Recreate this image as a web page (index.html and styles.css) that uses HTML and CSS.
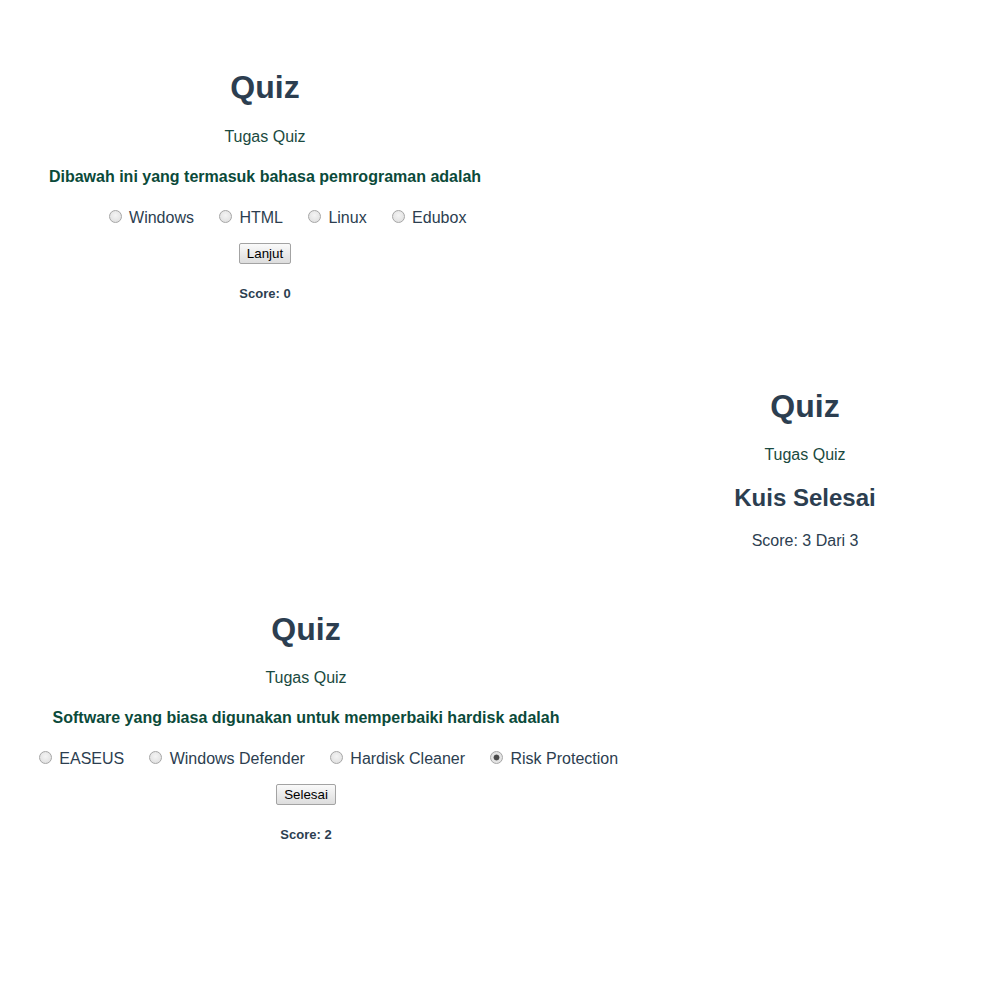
FILE: index.html
```html
<!DOCTYPE html>
<html lang="id">
<head>
<meta charset="utf-8">
<title>Quiz</title>
<link rel="stylesheet" href="styles.css">
</head>
<body>
<main class="page">
  <section class="quiz quiz-one">
    <h1 class="title">Quiz</h1>
    <p class="sub">Tugas Quiz</p>
    <p class="question">Dibawah ini yang termasuk bahasa pemrograman adalah</p>
    <div class="options">
      <label class="opt"><input type="radio" name="q1" class="radio"> Windows</label>
      <label class="opt"><input type="radio" name="q1" class="radio"> HTML</label>
      <label class="opt"><input type="radio" name="q1" class="radio"> Linux</label>
      <label class="opt"><input type="radio" name="q1" class="radio"> Edubox</label>
    </div>
    <div class="actions"><button class="btn" type="button">Lanjut</button></div>
    <p class="score">Score: 0</p>
  </section>

  <section class="final">
    <h1 class="title">Quiz</h1>
    <p class="sub sub-tight">Tugas Quiz</p>
    <h2 class="done">Kuis Selesai</h2>
    <p class="result">Score: 3 Dari 3</p>
  </section>

  <section class="quiz quiz-three">
    <h1 class="title">Quiz</h1>
    <p class="sub sub-tight">Tugas Quiz</p>
    <p class="question">Software yang biasa digunakan untuk memperbaiki hardisk adalah</p>
    <div class="options">
      <label class="opt"><input type="radio" name="q3" class="radio"> EASEUS</label>
      <label class="opt"><input type="radio" name="q3" class="radio"> Windows Defender</label>
      <label class="opt"><input type="radio" name="q3" class="radio"> Hardisk Cleaner</label>
      <label class="opt"><input type="radio" name="q3" class="radio" checked> Risk Protection</label>
    </div>
    <div class="actions"><button class="btn" type="button">Selesai</button></div>
    <p class="score">Score: 2</p>
  </section>
</main>
</body>
</html>
```

FILE: styles.css
```css
html, body {
  margin: 0;
  padding: 0;
  background: #ffffff;
}

body {
  font-family: "Liberation Sans", Arial, sans-serif;
  color: #2c3e50;
  width: 1000px;
  height: 1000px;
  overflow: hidden;
}

.page {
  display: flex;
  flex-direction: column;
  align-items: flex-start;
}

section {
  text-align: center;
}

.quiz-one {
  width: 530px;
  margin-top: 69px;
}

.final {
  width: 390px;
  margin-left: 610px;
  margin-top: 87px;
}

.quiz-three {
  width: 612px;
  margin-top: 61px;
}

.title {
  margin: 0;
  font-size: 32px;
  line-height: 37px;
  font-weight: bold;
  color: #2c3e50;
}

.sub {
  margin: 21.5px 0 0;
  font-size: 16px;
  line-height: 18px;
  color: #1a4a40;
}

.sub-tight {
  margin-top: 21px;
}

.question {
  margin: 22.5px 0 0;
  font-size: 16px;
  line-height: 18px;
  font-weight: bold;
  color: #0b4a3a;
}

.options {
  margin-top: 23px;
  padding-left: 40px;
  display: flex;
  flex-wrap: nowrap;
  justify-content: center;
  font-size: 16px;
  line-height: 18px;
  color: #2c3e50;
}

.opt {
  flex-shrink: 0;
  white-space: nowrap;
  margin: 0 10px;
}

.radio {
  -webkit-appearance: none;
  appearance: none;
  box-sizing: border-box;
  width: 13px;
  height: 13px;
  margin: 0 3px 0 5px;
  border: 1px solid #a6a6a6;
  border-radius: 50%;
  background: radial-gradient(circle at 50% 40%, #f4f4f4 0%, #dcdcdc 100%);
  vertical-align: baseline;
}

.radio:checked {
  background: radial-gradient(circle, #4a4a4a 0 2.2px, #7a7a7a 2.8px, #e6e6e6 3.3px, #dedede 100%);
}

.actions {
  margin-top: 16px;
  line-height: 0;
}

.btn {
  box-sizing: border-box;
  height: 21px;
  padding: 0 7px;
  font-family: "Liberation Sans", Arial, sans-serif;
  font-size: 13.33px;
  line-height: 19px;
  color: #000000;
  background: linear-gradient(#fafafa, #dddddd);
  border: 1px solid #a3a3a3;
  border-radius: 2px;
  margin: 0;
}

.score {
  margin: 21.5px 0 0;
  font-size: 13px;
  line-height: 15px;
  font-weight: bold;
  color: #2c3e50;
}

.done {
  margin: 20px 0 0;
  font-size: 24px;
  line-height: 28px;
  font-weight: bold;
  color: #2c3e50;
}

.result {
  margin: 20px 0 0;
  font-size: 16px;
  line-height: 18px;
  color: #2c3e50;
}
```
